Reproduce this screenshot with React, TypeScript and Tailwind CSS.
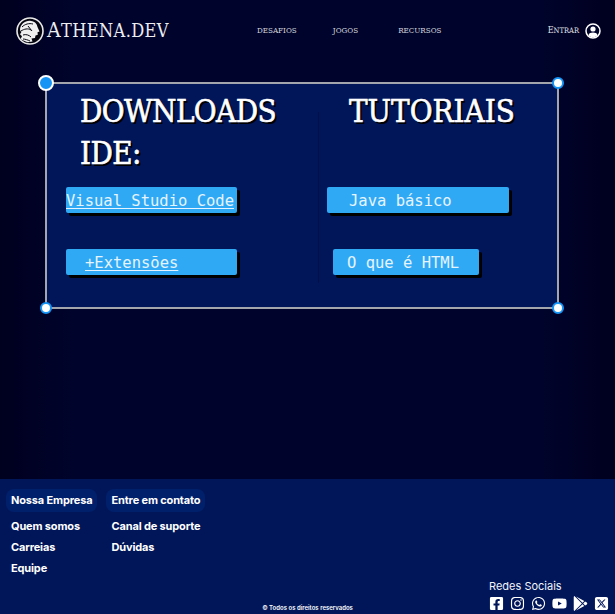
import React from 'react';
import { FaFacebookSquare, FaInstagram, FaWhatsapp, FaYoutube, FaGooglePlay } from 'react-icons/fa';
import { FaSquareXTwitter } from 'react-icons/fa6';

const Logo = () => (
  <svg width="28" height="28" viewBox="0 0 28 28">
    <circle cx="14" cy="14" r="13" fill="#050510" stroke="#e8e8e8" strokeWidth="1.6" />
    <path d="M4 13C4 7 10 3 15 4c4 .5 6 3 6.5 6l2 4.5-2 .8.3 2.5-2.3.8-.5 2.5-3.5.5 1 3-5 .6-7-3 1.5-3-2-2 1.3-2z" fill="#f0f0f0" />
    <path d="M6 10c3-3 7-4 11-3M5 14c3-2 7-3 10-1M7 18c3-1 6 0 8 2M7 22c2 0 5 1 7 2M12 9l4 5" stroke="#050510" strokeWidth="1" fill="none" />
  </svg>
);

const UserIcon = () => (
  <svg width="16" height="16" viewBox="0 0 16 16">
    <circle cx="8" cy="8" r="7" fill="#00032a" stroke="#fff" strokeWidth="1.5" />
    <circle cx="8" cy="6" r="2.6" fill="#fff" />
    <path d="M3.4 12.2C4 10.2 6 9.6 8 9.6s4 .6 4.6 2.6C11.5 13.6 9.8 14.2 8 14.2s-3.5-.6-4.6-2z" fill="#fff" />
  </svg>
);

const Handle = ({ className }: { className: string }) => (
  <span className={`absolute h-[12px] w-[12px] rounded-full border-[2.5px] border-[#1594f5] bg-white ${className}`} />
);

const LinkButton = ({ className, children }: { className: string; children: React.ReactNode }) => (
  <a className={`flex h-[26px] items-center rounded-[2px] bg-[#30a9f5] pt-[3px] text-[15.5px] leading-none text-[#e6f4ff] shadow-[3px_3px_0_#000] [font-family:'DejaVu_Sans_Mono',monospace] ${className}`}>
    {children}
  </a>
);

const serifClass = "[font-family:'DejaVu_Serif_Condensed','DejaVu_Serif',serif]";

const headingClass = `text-[31px] leading-[42px] text-white [-webkit-text-stroke:0.6px_white] [text-shadow:2px_2px_0_#000] ${serifClass}`;

const navClass = `text-[8px] uppercase text-[#d2d5de] ${serifClass}`;

const pillClass = 'flex h-[23px] items-center rounded-lg bg-[#00206b] px-[5px] text-[11px] font-bold tracking-[-0.15px]';

const listClass = 'ml-[5px] mt-[4px] flex flex-col text-[11px] font-bold leading-[21px] tracking-[-0.15px]';

export default function App() {
  return (
    <div className="flex h-[614px] w-[615px] flex-col overflow-hidden bg-[linear-gradient(90deg,#00001f,#00032b_12%,#00032b_88%,#00001f)] [font-family:Inter,sans-serif]">
      {/* Header */}
      <header className="flex h-[61px] items-center pl-[16px] pr-[14px]">
        <Logo />
        <span className={`ml-[3px] flex items-baseline leading-none tracking-[0.4px] text-[#eceef2] ${serifClass}`}>
          <span className="text-[21px]">A</span>
          <span className="text-[18px]">THENA.DEV</span>
        </span>
        <nav className="ml-[88px] flex items-center">
          <a className={navClass}>Desafios</a>
          <a className={`ml-[36px] ${navClass}`}>Jogos</a>
          <a className={`ml-[40px] ${navClass}`}>Recursos</a>
        </nav>
        <div className="ml-auto flex items-center gap-[6px]">
          <span className={`flex items-baseline text-[#e0e3ea] ${serifClass}`}>
            <span className="text-[9px]">E</span>
            <span className="text-[7.5px]">NTRAR</span>
          </span>
          <UserIcon />
        </div>
      </header>

      {/* Painel principal */}
      <main className="relative ml-[45px] mt-[21px] grid h-[227px] w-[514px] grid-cols-[271px_1fr] border-2 border-[#a3a6ad] bg-[#001659]">
        <span className="absolute -left-[9px] -top-[9px] h-[16px] w-[16px] rounded-full border-2 border-white bg-[#1594f5]" />
        <Handle className="-right-[7px] -top-[7px]" />
        <Handle className="-bottom-[7px] -left-[7px]" />
        <Handle className="-bottom-[7px] -right-[7px]" />

        <section className="flex flex-col pl-[19px] pt-[6px]">
          <h2 className={`ml-[14px] w-[210px] tracking-[-0.6px] ${headingClass}`}>DOWNLOADS IDE:</h2>
          <LinkButton className="mt-[13px] w-[171px] underline underline-offset-2">Visual Studio Code</LinkButton>
          <LinkButton className="mt-[36px] w-[171px] pl-[19px]">
            <span className="underline underline-offset-2">+Extensões</span>
          </LinkButton>
        </section>

        <section className="relative flex flex-col items-start pl-[9px] pt-[6px]">
          <span className="absolute bottom-[24px] left-0 top-[28px] w-px bg-[#001048]" />
          <h2 className={`ml-[22px] ${headingClass}`}>TUTORIAIS</h2>
          <LinkButton className="mt-[55px] w-[182px] pl-[22px]">Java básico</LinkButton>
          <LinkButton className="ml-[6px] mt-[36px] w-[146px] pl-[14px]">O que é HTML</LinkButton>
        </section>
      </main>

      {/* Rodape */}
      <footer className="relative mt-auto flex h-[135px] gap-[9px] bg-[#001659] pl-[6px] pt-[10px] text-white">
        <div className="flex flex-col items-start">
          <h3 className={pillClass}>Nossa Empresa</h3>
          <ul className={listClass}>
            <li>Quem somos</li>
            <li>Carreias</li>
            <li>Equipe</li>
          </ul>
        </div>
        <div className="flex flex-col items-start">
          <h3 className={pillClass}>Entre em contato</h3>
          <ul className={listClass}>
            <li>Canal de suporte</li>
            <li>Dúvidas</li>
          </ul>
        </div>
        <p className="absolute bottom-[2px] left-0 w-full text-center text-[6px] font-semibold">© Todos os direitos reservados</p>
        <div className="absolute bottom-[3px] right-[6px] flex flex-col">
          <span className="text-[11px] leading-[16px] text-[#f2f4fa]">Redes Sociais</span>
          <div className="mt-[2px] flex items-center gap-[6px] text-[15px]">
            <FaFacebookSquare />
            <FaInstagram />
            <FaWhatsapp />
            <FaYoutube />
            <FaGooglePlay />
            <FaSquareXTwitter />
          </div>
        </div>
      </footer>
    </div>
  );
}
